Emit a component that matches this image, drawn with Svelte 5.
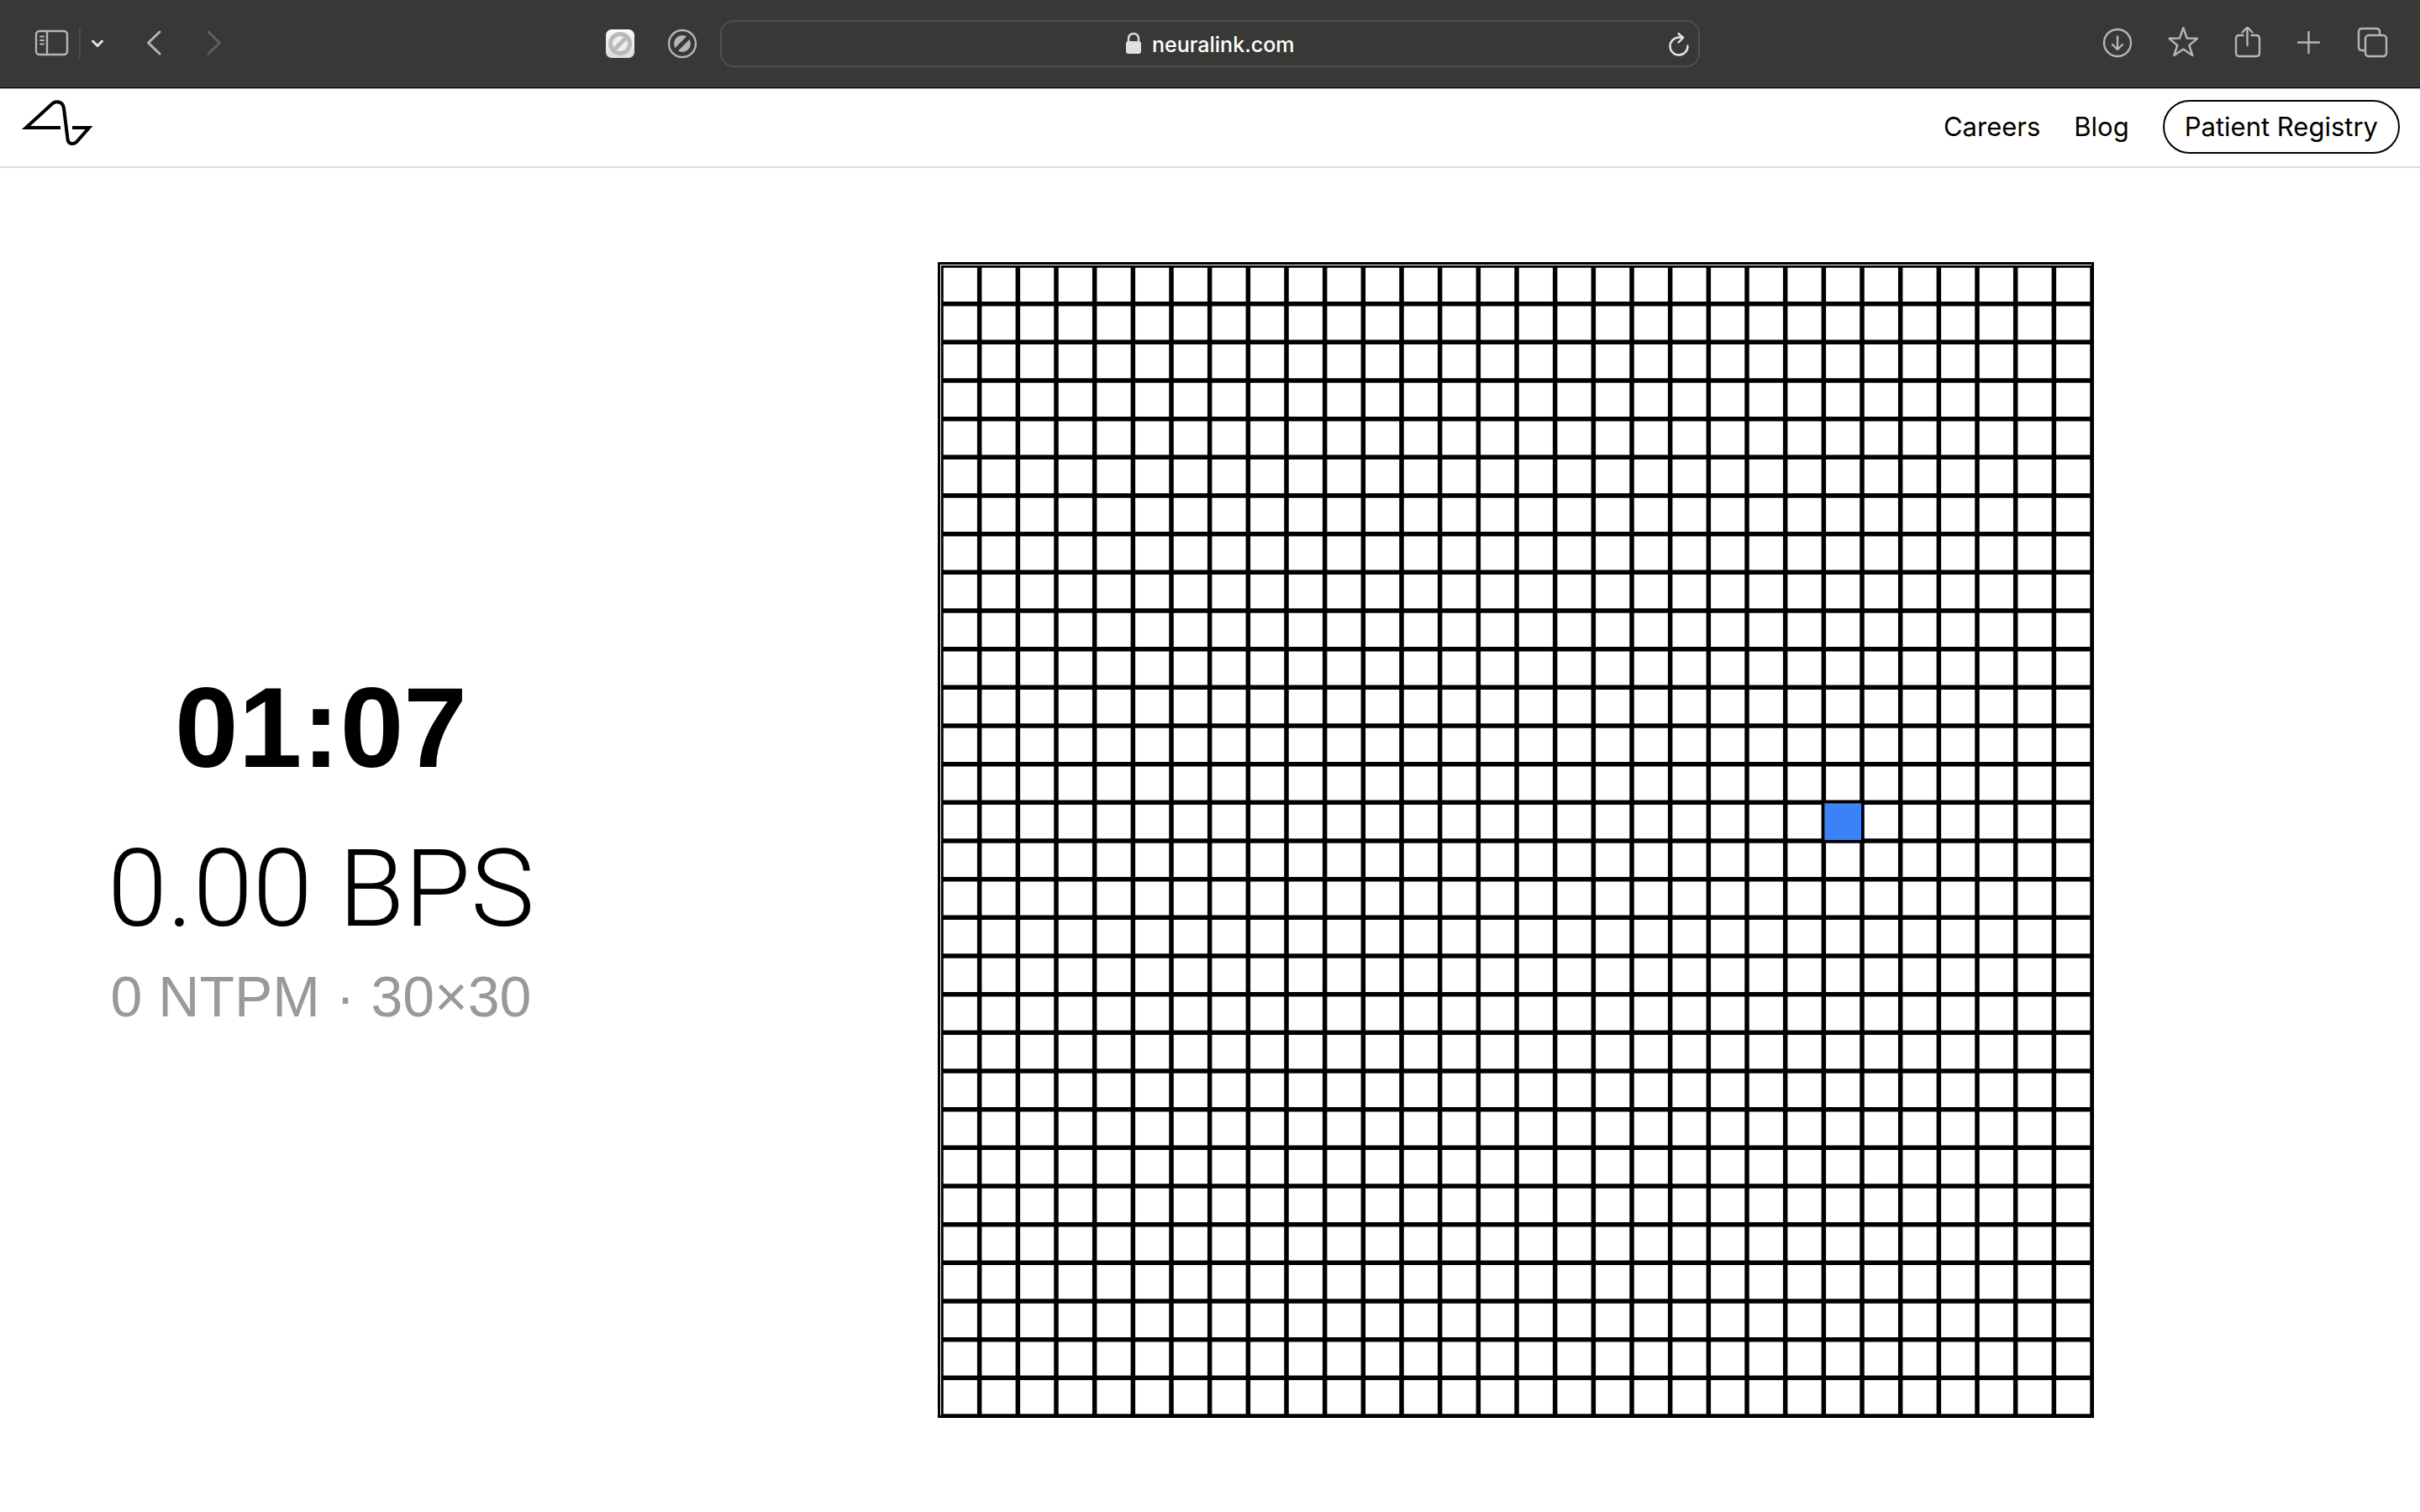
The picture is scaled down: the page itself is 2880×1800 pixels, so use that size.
<script>
  const size = 30;
  const target = { col: 23, row: 14 };
  const origin = 4;
  const pitch = 1370 / size;
  const lines = Array.from({ length: size + 1 }, (_, i) => origin + i * pitch);
  const seconds = 67;
  const clock = [Math.floor(seconds / 60), seconds % 60]
    .map((n) => String(n).padStart(2, '0'))
    .join(':');
  let address = $state('neuralink.com');
</script>

<div class="page">
  <div class="toolbar">
    <div class="side">
      <div class="group nav-group">
        <button class="wide" aria-label="Show sidebar">
          <svg width="44" height="40" viewBox="40 32 44 40">
            <rect x="43" y="37" width="37" height="28" rx="4" />
            <path d="M56 37V65" />
            <path class="thin" d="M48 43.500H52M48 48H52M48 52.500H52" />
          </svg>
        </button>
        <span class="divider"></span>
        <button class="small bright" aria-label="Tab groups">
          <svg width="24" height="40" viewBox="104 32 24 40"><path class="heavy" d="M110.500 49L116 54.500L121.500 49" /></svg>
        </button>
        <button class="back" aria-label="Back">
          <svg width="40" height="40" viewBox="163 32 40 40"><path class="heavy" d="M190 38L176.500 51L190 64" /></svg>
        </button>
        <button class="forward" aria-label="Forward" disabled>
          <svg width="40" height="40" viewBox="235 32 40 40"><path class="heavy" d="M248 38L261.500 51L248 64" /></svg>
        </button>
      </div>
      <div class="group extensions">
        <button aria-label="Content blocker">
          <svg width="40" height="40" viewBox="0 0 40 40">
            <defs>
              <linearGradient id="tile" x1="0" y1="0" x2="0" y2="1">
                <stop offset="0" stop-color="#fbfbfb" />
                <stop offset="1" stop-color="#dcdcdc" />
              </linearGradient>
            </defs>
            <rect class="solid" x="3" y="3" width="34" height="34" rx="7" fill="url(#tile)" />
            <circle class="solid" cx="20" cy="20" r="14" fill="#bababa" />
            <circle class="solid" cx="20" cy="20" r="9" fill="#efefef" />
            <path class="slash" d="M12 28L28 12" stroke="#bababa" />
          </svg>
        </button>
        <button aria-label="Blocker settings">
          <svg width="40" height="40" viewBox="0 0 40 40">
            <circle cx="20" cy="20" r="16" />
            <circle class="solid" cx="20" cy="20" r="10" fill="#b5b5b3" />
            <path class="slash" d="M12 28L28 12" stroke="#383836" />
          </svg>
        </button>
      </div>
    </div>

    <div class="address">
      <svg class="lock" width="20" height="28" viewBox="0 0 20 28">
        <rect class="solid" x="1" y="11" width="18" height="15" rx="3" fill="#e0e0e0" />
        <path d="M4 12V8C4 0 16 0 16 8V12" stroke="#e0e0e0" />
      </svg>
      <input type="text" aria-label="Address" bind:value={address} />
      <button class="reload bright" aria-label="Reload page">
        <svg width="28" height="32" viewBox="1985 36 28 32">
          <path d="M2008.500 54.500A10.500 10.500 0 1 1 1998 44.500H2003M1997.500 40L2003 45L1997.500 50.500" />
        </svg>
      </button>
    </div>

    <div class="group actions">
      <button aria-label="Downloads">
        <svg width="40" height="40" viewBox="2500 32 40 40">
          <circle cx="2520" cy="51" r="16" />
          <path d="M2520 43.500V58.500M2514 53L2520 59L2526 53" />
        </svg>
      </button>
      <button aria-label="Bookmarks">
        <svg width="40" height="40" viewBox="2576 32 40 40">
          <path d="M2598.300 33L2602.600 45.500L2615 45.800L2605.300 54L2609.300 66L2598.300 58.600L2587.300 66L2591.300 54L2581.600 45.800L2594 45.500Z" />
        </svg>
      </button>
      <button aria-label="Share">
        <svg width="40" height="40" viewBox="2652 32 40 40">
          <path d="M2669.500 42H2665Q2661 42 2661 46V63Q2661 67 2665 67H2685Q2689 67 2689 63V46Q2689 42 2685 42H2679.500M2674.500 54V33M2668.500 38.500L2674.500 32.500L2680.500 38.500" />
        </svg>
      </button>
      <button aria-label="New tab">
        <svg width="40" height="40" viewBox="2728 32 40 40"><path d="M2747.500 38V63M2735 50.500H2760" /></svg>
      </button>
      <button aria-label="Tab overview">
        <svg width="40" height="40" viewBox="2804 32 40 40">
          <rect x="2815" y="42" width="25" height="25" rx="4" />
          <path d="M2814.500 60H2811Q2807 60 2807 56V38Q2807 34 2811 34H2828Q2832 34 2832 38V41.500" />
        </svg>
      </button>
    </div>
  </div>

  <header>
    <a class="logo" href="/" aria-label="Neuralink home">
      <svg width="88" height="64" viewBox="24 120 88 64">
        <path d="M72 153H31L61 125.500C66 120 75 121.500 76 130L80.500 166.500C81 172.500 87 173.500 91 170L106 153H86" />
      </svg>
    </a>
    <nav>
      <a href="/careers">Careers</a>
      <a href="/blog">Blog</a>
      <a class="pill" href="/patient-registry">Patient Registry</a>
    </nav>
  </header>

  <main>
    <section class="stats">
      <time class="clock">{clock}</time>
      <p class="rate">0.00 BPS</p>
      <p class="detail">0 NTPM · {size}×{size}</p>
    </section>
    <section class="stage">
      <svg class="board" viewBox="0 0 1376 1376" role="img" aria-label="Target grid">
        <defs>
          <clipPath id="field"><rect x="4" y="4" width="1370" height="1370" /></clipPath>
        </defs>
        <rect class="frame" x="1.500" y="1.500" width="1373" height="1373" />
        <g clip-path="url(#field)">
          {#each lines as at}
            <path class="rule" d="M{at} 4V1374M4 {at}H1374" />
          {/each}
        </g>
        <rect
          class="target"
          x={origin + target.col * pitch + 1}
          y={origin + target.row * pitch + 1}
          width={pitch - 2}
          height={pitch - 2}
        />
      </svg>
    </section>
  </main>
</div>

<style>
  :global(body) {
    margin: 0;
    background: #fff;
  }
  .page {
    display: flex;
    flex-direction: column;
    min-height: 100vh;
    color: #000;
    font-family: Inter, 'Liberation Sans', sans-serif;
  }
  svg {
    display: block;
    fill: none;
  }
  button {
    padding: 0;
    border: 0;
    background: none;
    color: #b5b5b3;
  }
  button:disabled {
    color: #5f5f5d;
  }
  .bright {
    color: #e4e4e2;
  }
  .toolbar {
    display: grid;
    grid-template-columns: 1fr minmax(400px, 1166px) 1fr;
    align-items: center;
    height: 104px;
    background: #383836;
    border-bottom: 1px solid #000;
    box-shadow: 0 1px #b4b4b4;
  }
  .toolbar svg {
    stroke: currentColor;
    stroke-width: 2.4;
    stroke-linecap: round;
    stroke-linejoin: round;
  }
  .toolbar .solid {
    stroke: none;
  }
  .toolbar .extensions svg {
    stroke-linecap: butt;
  }
  .slash {
    stroke-width: 5;
  }
  .heavy {
    stroke-width: 3;
  }
  .thin {
    stroke-width: 2;
  }
  .side,
  .group {
    display: flex;
    align-items: center;
  }
  .side {
    justify-content: space-between;
    padding: 0 25px 0 40px;
  }
  .divider {
    width: 2px;
    height: 36px;
    margin: 0 8px 0 10px;
    background: #4c4c4a;
  }
  .back {
    margin-left: 35px;
  }
  .forward {
    margin-left: 32px;
  }
  .extensions {
    gap: 34px;
  }
  .address {
    display: flex;
    align-items: center;
    justify-content: center;
    gap: 12px;
    position: relative;
    box-sizing: border-box;
    height: 56px;
    border: 2px solid #4f4f4d;
    border-radius: 16px;
  }
  .address input {
    width: 170px;
    padding: 2px 0 0;
    border: 0;
    background: none;
    color: #fff;
    font: 500 25px/32px Inter, sans-serif;
  }
  .reload {
    position: absolute;
    right: 8px;
  }
  .actions {
    justify-content: flex-end;
    gap: 36px;
    padding-right: 36px;
  }
  header {
    display: flex;
    align-items: center;
    justify-content: space-between;
    box-sizing: border-box;
    height: 95px;
    padding: 0 24px 2px;
    border-bottom: 2px solid #dcdcdc;
  }
  .logo svg {
    stroke: #000;
    stroke-width: 4;
    stroke-miterlimit: 10;
  }
  nav {
    display: flex;
    align-items: center;
    gap: 40px;
    font-size: 31px;
    line-height: 40px;
  }
  nav a {
    color: #000;
    text-decoration: none;
  }
  .pill {
    padding: 10px 24px;
    border: 2px solid #000;
    border-radius: 32px;
  }
  main {
    display: grid;
    grid-template-columns: 728px 1fr;
    align-items: center;
    flex: 1;
  }
  .stats {
    display: flex;
    flex-direction: column;
    align-items: center;
    box-sizing: border-box;
    padding: 0 36px 12px 72px;
  }
  .stats p {
    margin: 0;
  }
  .clock {
    font: 700 136px/192px 'Liberation Sans', sans-serif;
  }
  .rate {
    font: 300 128px/192px Roboto, sans-serif;
  }
  .detail {
    color: #999;
    font: 400 68px/64px 'Liberation Sans', sans-serif;
  }
  .stage {
    display: flex;
    justify-content: center;
  }
  .board {
    width: min(100%, calc(100vh - 424px));
    aspect-ratio: 1;
  }
  .frame {
    stroke: #000;
    stroke-width: 3;
  }
  .rule {
    stroke: #000;
    stroke-width: 5.5;
  }
  .target {
    fill: #3b82f6;
  }
</style>
